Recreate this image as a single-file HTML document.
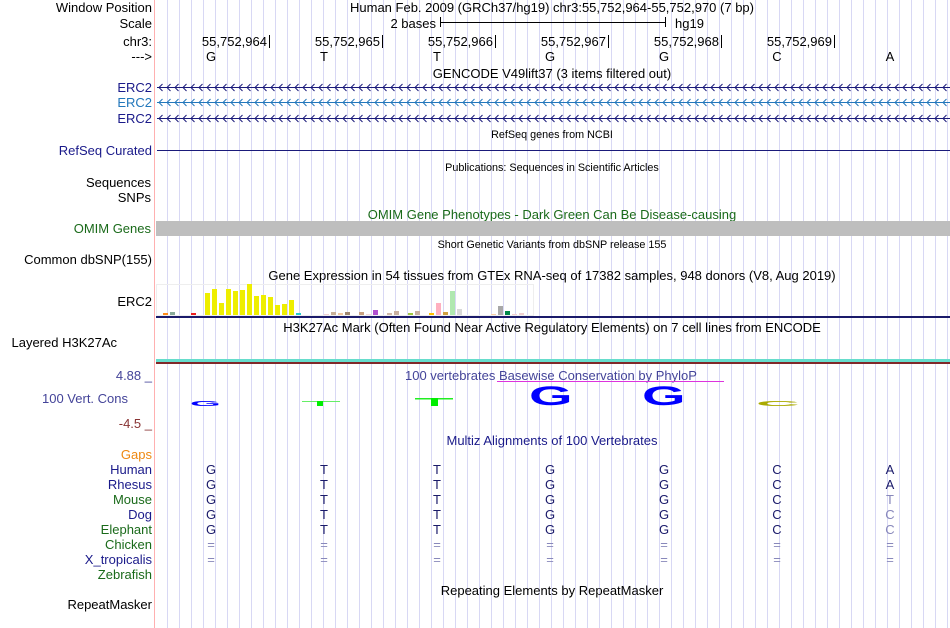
<!DOCTYPE html>
<html><head><meta charset="utf-8"><style>
html,body{margin:0;padding:0;background:#fff;width:950px;height:628px;overflow:hidden}
svg{display:block}
text{font-family:"Liberation Sans",Arial,sans-serif;font-size:13px}
.l{text-anchor:end}
.c{text-anchor:middle}
.s{font-size:10.8px}
</style></head><body>
<svg width="950" height="628" viewBox="0 0 950 628" xmlns="http://www.w3.org/2000/svg">
<defs>
<pattern id="grid" patternUnits="userSpaceOnUse" x="167" y="0" width="12" height="10">
<rect x="0" y="0" width="1" height="10" fill="#d8d8f4"/>
</pattern>
<pattern id="chev1" patternUnits="userSpaceOnUse" x="158" y="0" width="8" height="628">
<path d="M4.5,84 L1,87.5 L4.5,91 M4.5,115 L1,118.5 L4.5,122" fill="none" stroke="#1a1a7a" stroke-width="1"/>
<path d="M4.5,99 L1,102.5 L4.5,106" fill="none" stroke="#2277bb" stroke-width="1"/>
</pattern>
</defs>
<rect x="156" y="0" width="794" height="628" fill="url(#grid)"/>
<rect x="154" y="0" width="1" height="628" fill="#ffb0b0"/>

<text class="l" x="152" y="12">Window Position</text>
<text class="c" x="552" y="12">Human Feb. 2009 (GRCh37/hg19)   chr3:55,752,964-55,752,970 (7 bp)</text>
<text class="l" x="152" y="28">Scale</text>
<text class="l" x="436" y="28">2 bases</text>
<rect x="440" y="17" width="1" height="10" fill="#000"/>
<rect x="440" y="22" width="225" height="1" fill="#000"/>
<rect x="665" y="17" width="1" height="10" fill="#000"/>
<text x="675" y="28">hg19</text>
<text class="l" x="152" y="46">chr3:</text>
<g fill="#000">
<text class="l" x="267" y="46">55,752,964</text><rect x="269" y="35" width="1" height="13"/>
<text class="l" x="380" y="46">55,752,965</text><rect x="382" y="35" width="1" height="13"/>
<text class="l" x="493" y="46">55,752,966</text><rect x="495" y="35" width="1" height="13"/>
<text class="l" x="606" y="46">55,752,967</text><rect x="608" y="35" width="1" height="13"/>
<text class="l" x="719" y="46">55,752,968</text><rect x="721" y="35" width="1" height="13"/>
<text class="l" x="832" y="46">55,752,969</text><rect x="834" y="35" width="1" height="13"/>
</g>
<text class="l" x="152" y="61">---&gt;</text>
<text class="c" x="211" y="61">G</text><text class="c" x="324" y="61">T</text><text class="c" x="437" y="61">T</text><text class="c" x="550" y="61">G</text><text class="c" x="664" y="61">G</text><text class="c" x="777" y="61">C</text><text class="c" x="890" y="61">A</text>
<text class="c" x="552" y="78">GENCODE V49lift37 (3 items filtered out)</text>
<text class="l" x="152" y="92" fill="#1a1a8a">ERC2</text>
<text class="l" x="152" y="107" fill="#2277bb">ERC2</text>
<text class="l" x="152" y="123" fill="#1a1a8a">ERC2</text>
<rect x="157" y="87" width="793" height="1" fill="#1a1a7a"/>
<rect x="157" y="102" width="793" height="1" fill="#2277bb"/>
<rect x="157" y="118" width="793" height="1" fill="#1a1a7a"/>
<rect x="157" y="80" width="793" height="45" fill="url(#chev1)"/>

<text class="c s" x="552" y="138">RefSeq genes from NCBI</text>
<text class="l" x="152" y="155" fill="#1a1a8a">RefSeq Curated</text>
<rect x="157" y="150" width="793" height="1" fill="#1a1a7a"/>
<text class="c s" x="552" y="171">Publications: Sequences in Scientific Articles</text>
<text class="l" x="151" y="187">Sequences</text>
<text class="l" x="151" y="202">SNPs</text>
<text class="c" x="552" y="219" fill="#1a6a1a">OMIM Gene Phenotypes - Dark Green Can Be Disease-causing</text>
<text class="l" x="151" y="233" fill="#1a6a1a">OMIM Genes</text>
<rect x="156" y="221" width="794" height="15" fill="#bebebe"/>
<text class="c s" x="552" y="248">Short Genetic Variants from dbSNP release 155</text>
<text class="l" x="152" y="264">Common dbSNP(155)</text>
<text class="c" x="552" y="280">Gene Expression in 54 tissues from GTEx RNA-seq of 17382 samples, 948 donors (V8, Aug 2019)</text>
<text class="l" x="152" y="306">ERC2</text>
<rect x="156.5" y="284.5" width="377" height="31" fill="none" stroke="#eeeeee"/>
<g>
<rect x="163" y="313" width="5" height="2" fill="#ff8c1a"/>
<rect x="170" y="312" width="5" height="3" fill="#88aa99"/>
<rect x="191" y="313" width="5" height="2" fill="#ee2020"/>
<g fill="#eeee00">
<rect x="205" y="293" width="5" height="22"/><rect x="212" y="289" width="5" height="26"/><rect x="219" y="303" width="5" height="12"/><rect x="226" y="289" width="5" height="26"/><rect x="233" y="291" width="5" height="24"/><rect x="240" y="290" width="5" height="25"/><rect x="247" y="284" width="5" height="31"/><rect x="254" y="296" width="5" height="19"/><rect x="261" y="295" width="5" height="20"/><rect x="268" y="297" width="5" height="18"/><rect x="275" y="305" width="5" height="10"/><rect x="282" y="304" width="5" height="11"/><rect x="289" y="300" width="5" height="15"/>
</g>
<rect x="296" y="313" width="5" height="2" fill="#22cccc"/>
<rect x="324" y="314" width="5" height="1" fill="#f0d0d0"/>
<rect x="331" y="312" width="5" height="3" fill="#c8b098"/>
<rect x="338" y="313" width="5" height="2" fill="#f0c8a0"/>
<rect x="345" y="312" width="5" height="3" fill="#a08870"/>
<rect x="359" y="312" width="5" height="3" fill="#c8a080"/>
<rect x="366" y="314" width="5" height="1" fill="#f4d8d8"/>
<rect x="373" y="310" width="5" height="5" fill="#b050d0"/>
<rect x="387" y="313" width="5" height="2" fill="#d0b8a8"/>
<rect x="394" y="311" width="5" height="4" fill="#c8b0a0"/>
<rect x="408" y="313" width="5" height="2" fill="#a0c840"/>
<rect x="415" y="311" width="5" height="4" fill="#c8b0a0"/>
<rect x="429" y="313" width="5" height="2" fill="#ffc000"/>
<rect x="436" y="303" width="5" height="12" fill="#ffb0c0"/>
<rect x="443" y="312" width="5" height="3" fill="#d0a040"/>
<rect x="450" y="291" width="5" height="24" fill="#b0e8b0"/>
<rect x="457" y="309" width="5" height="6" fill="#d8d8d8"/>
<rect x="491" y="314" width="5" height="1" fill="#f8d0a8"/>
<rect x="498" y="306" width="5" height="9" fill="#a8a8a8"/>
<rect x="505" y="311" width="5" height="4" fill="#008848"/>
<rect x="512" y="314" width="5" height="1" fill="#f4d0d0"/>
<rect x="519" y="313" width="5" height="2" fill="#f0d0d0"/>
</g>
<rect x="156" y="316" width="794" height="2" fill="#1a1a6a"/>
<text class="c" x="552" y="332">H3K27Ac Mark (Often Found Near Active Regulatory Elements) on 7 cell lines from ENCODE</text>
<text class="l" x="117" y="347">Layered H3K27Ac</text>
<rect x="156" y="359" width="794" height="3" fill="#66ddcc"/>
<rect x="156" y="362" width="794" height="2" fill="#802828"/>

<text class="l" x="152" y="380" fill="#444499">4.88 _</text>
<text x="405" y="380" fill="#444499">100 vertebrates Basewise Conservation by PhyloP</text>
<rect x="497" y="381" width="227" height="1" fill="#dd33dd"/>
<text class="l" x="128" y="403" fill="#444499">100 Vert. Cons</text>
<text class="l" x="152" y="428" fill="#883333">-4.5 _</text>
<text x="0" y="0" fill="#0000ff" font-weight="bold" transform="translate(190,406) scale(3.3,0.6)" style="font-size:12px">G</text>
<rect x="302" y="401" width="38" height="1" fill="#66ee66"/><rect x="317" y="401" width="6" height="5" fill="#00ee00"/>
<rect x="415" y="398" width="38" height="1.5" fill="#22ee22"/><rect x="431" y="398" width="7" height="8" fill="#00ee00"/>
<text x="0" y="0" fill="#0000ff" font-weight="bold" transform="translate(529,405) scale(3.5,1.65)" style="font-size:16px">G</text>
<text x="0" y="0" fill="#0000ff" font-weight="bold" transform="translate(642,405) scale(3.5,1.65)" style="font-size:16px">G</text>
<text x="0" y="0" fill="#aaaa00" font-weight="bold" transform="translate(756,406) scale(4.3,0.5)" style="font-size:14px">C</text>

<text class="c" x="552" y="445" fill="#1a1a8a">Multiz Alignments of 100 Vertebrates</text>
<text class="l" x="152" y="459" fill="#ee8811">Gaps</text>
<g fill="#1a1a8a">
<text class="l" x="152" y="474">Human</text>
<text class="l" x="152" y="489">Rhesus</text>
<text class="l" x="152" y="519">Dog</text>
<text class="l" x="152" y="564">X_tropicalis</text>
</g>
<g fill="#1a6a1a">
<text class="l" x="152" y="504">Mouse</text>
<text class="l" x="152" y="534">Elephant</text>
<text class="l" x="152" y="549">Chicken</text>
<text class="l" x="152" y="579">Zebrafish</text>
</g>
<g fill="#1a1a6a">
<text class="c" x="211" y="474">G</text><text class="c" x="324" y="474">T</text><text class="c" x="437" y="474">T</text><text class="c" x="550" y="474">G</text><text class="c" x="664" y="474">G</text><text class="c" x="777" y="474">C</text><text class="c" x="890" y="474">A</text>
<text class="c" x="211" y="489">G</text><text class="c" x="324" y="489">T</text><text class="c" x="437" y="489">T</text><text class="c" x="550" y="489">G</text><text class="c" x="664" y="489">G</text><text class="c" x="777" y="489">C</text><text class="c" x="890" y="489">A</text>
<text class="c" x="211" y="504">G</text><text class="c" x="324" y="504">T</text><text class="c" x="437" y="504">T</text><text class="c" x="550" y="504">G</text><text class="c" x="664" y="504">G</text><text class="c" x="777" y="504">C</text>
<text class="c" x="211" y="519">G</text><text class="c" x="324" y="519">T</text><text class="c" x="437" y="519">T</text><text class="c" x="550" y="519">G</text><text class="c" x="664" y="519">G</text><text class="c" x="777" y="519">C</text>
<text class="c" x="211" y="534">G</text><text class="c" x="324" y="534">T</text><text class="c" x="437" y="534">T</text><text class="c" x="550" y="534">G</text><text class="c" x="664" y="534">G</text><text class="c" x="777" y="534">C</text>
</g>
<g fill="#8888bb">
<text class="c" x="890" y="504">T</text><text class="c" x="890" y="519">C</text><text class="c" x="890" y="534">C</text>
<text class="c" x="211" y="549">=</text><text class="c" x="324" y="549">=</text><text class="c" x="437" y="549">=</text><text class="c" x="550" y="549">=</text><text class="c" x="664" y="549">=</text><text class="c" x="777" y="549">=</text><text class="c" x="890" y="549">=</text>
<text class="c" x="211" y="564">=</text><text class="c" x="324" y="564">=</text><text class="c" x="437" y="564">=</text><text class="c" x="550" y="564">=</text><text class="c" x="664" y="564">=</text><text class="c" x="777" y="564">=</text><text class="c" x="890" y="564">=</text>
</g>
<text class="c" x="552" y="595">Repeating Elements by RepeatMasker</text>
<text class="l" x="152" y="609">RepeatMasker</text>
</svg>
</body></html>
